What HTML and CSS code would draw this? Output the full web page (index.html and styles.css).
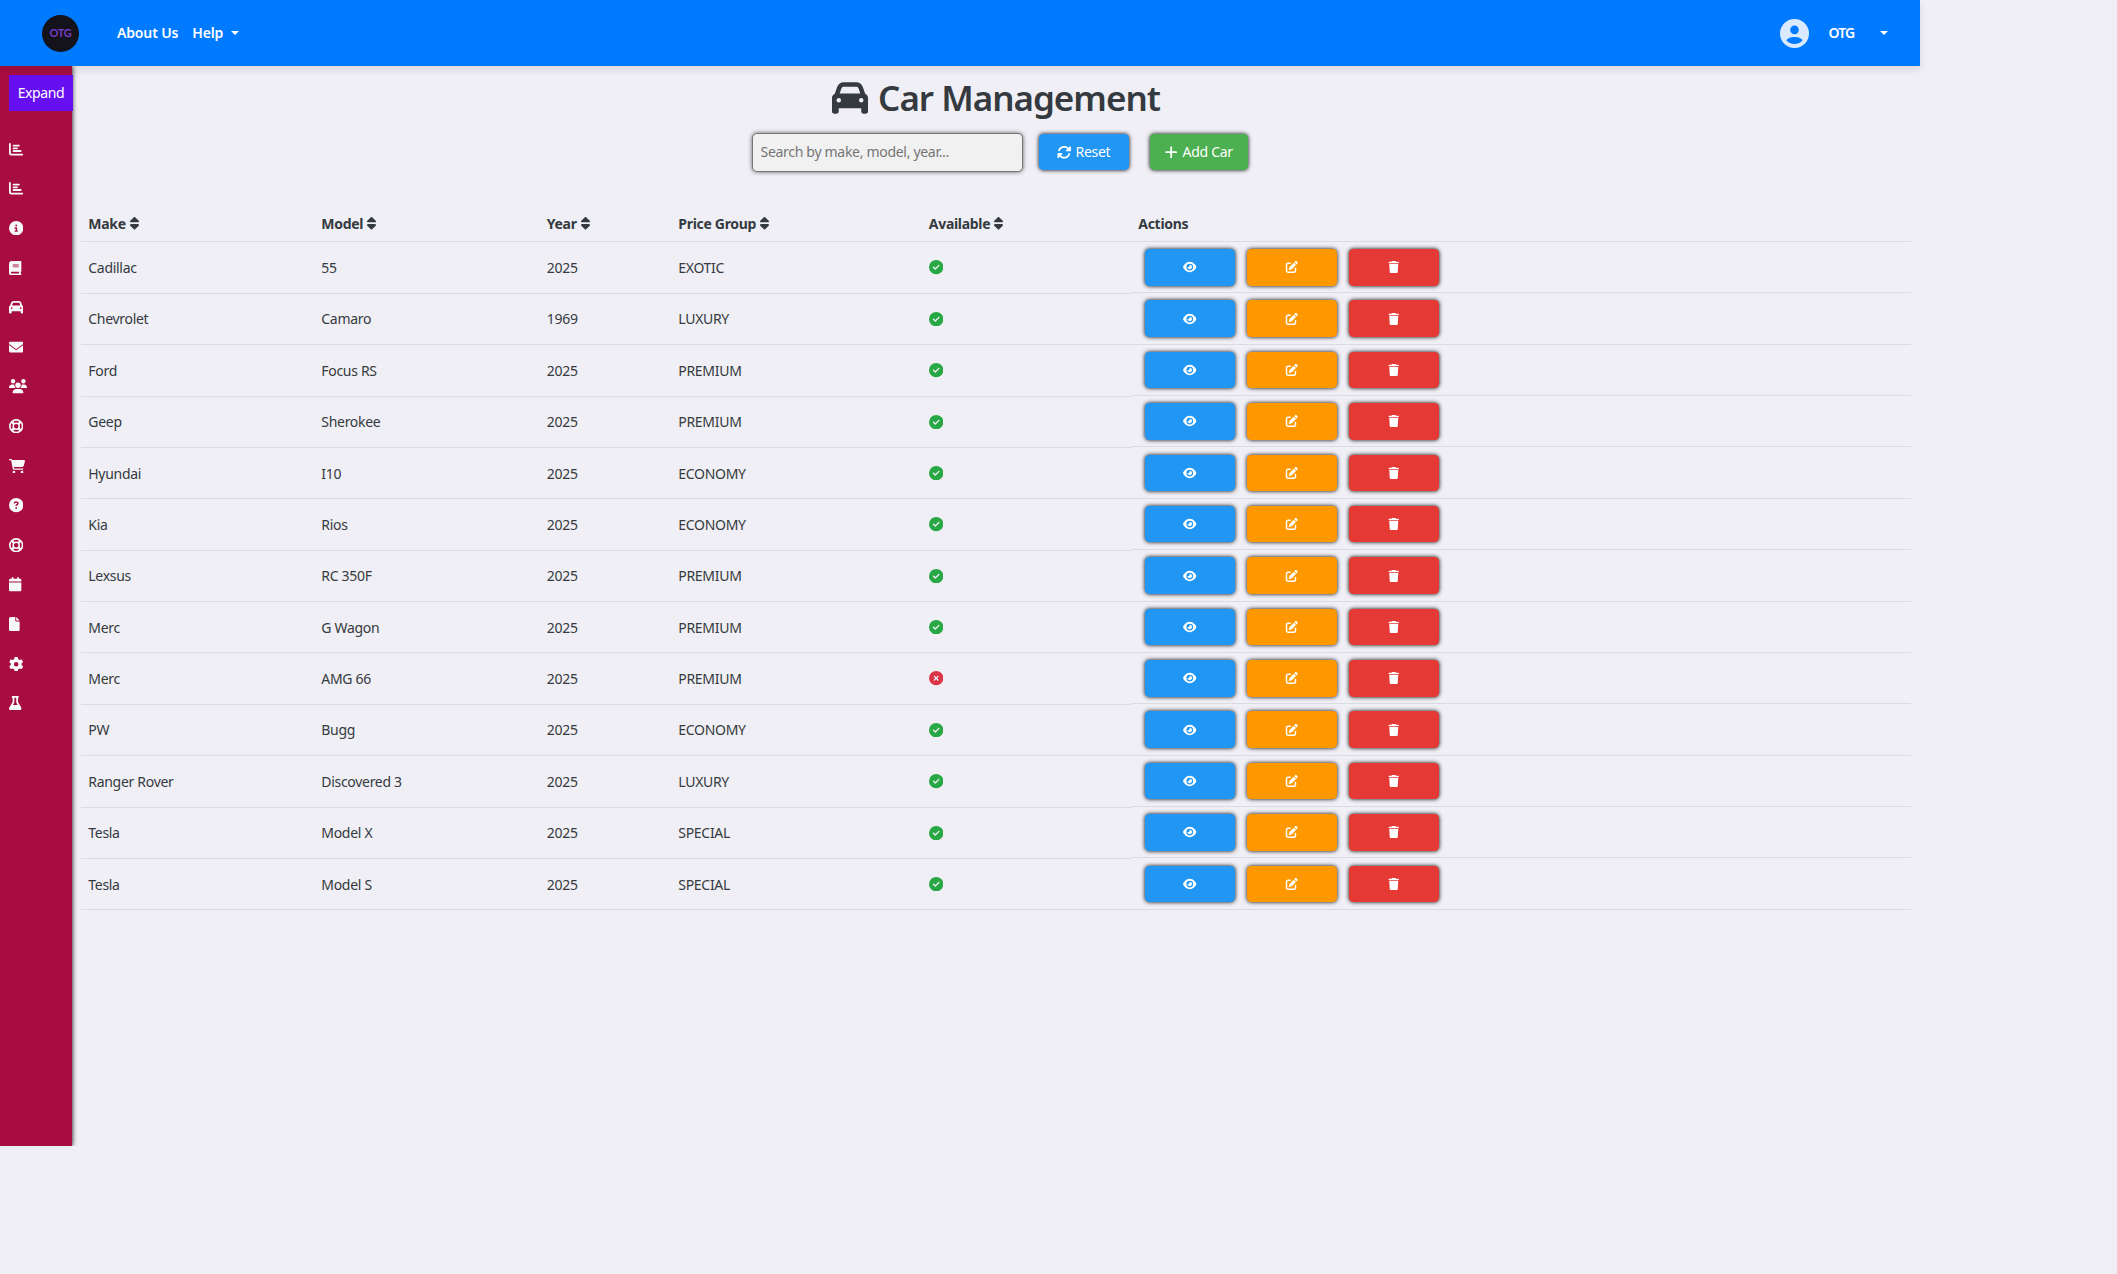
FILE: index.html
```html
<!DOCTYPE html>
<html lang="en">
  <head>
    <meta charset="UTF-8" />
    <meta name="viewport" content="width=device-width, initial-scale=1.0" />
    <title>Car Management</title>
    <link rel="stylesheet" href="styles.css">
  </head>
  <body>
    <svg class="sprite" xmlns="http://www.w3.org/2000/svg">
      <symbol id="chart" viewBox="0 0 512 512"><path d="M32 32c17.700 0 32 14.300 32 32V400c0 8.800 7.200 16 16 16H480c17.700 0 32 14.300 32 32s-14.300 32-32 32H80c-44.200 0-80-35.800-80-80V64C0 46.300 14.300 32 32 32zm96 96c0-17.700 14.300-32 32-32l192 0c17.700 0 32 14.300 32 32s-14.300 32-32 32l-192 0c-17.700 0-32-14.300-32-32zm32 64H288c17.700 0 32 14.300 32 32s-14.300 32-32 32H160c-17.700 0-32-14.300-32-32s14.300-32 32-32zm0 96H416c17.700 0 32 14.300 32 32s-14.300 32-32 32H160c-17.700 0-32-14.300-32-32s14.300-32 32-32z"/></symbol>
      <symbol id="info" viewBox="0 0 512 512"><path d="M256 512A256 256 0 1 0 256 0a256 256 0 1 0 0 512zM216 336h24V272H216c-13.300 0-24-10.700-24-24s10.700-24 24-24h48c13.300 0 24 10.700 24 24v88h8c13.300 0 24 10.700 24 24s-10.700 24-24 24H216c-13.300 0-24-10.700-24-24s10.700-24 24-24zm40-208a32 32 0 1 1 0 64 32 32 0 1 1 0-64z"/></symbol>
      <symbol id="book" viewBox="0 0 448 512"><path d="M96 0C43 0 0 43 0 96V416c0 53 43 96 96 96H384h32c17.700 0 32-14.300 32-32s-14.300-32-32-32V384c17.700 0 32-14.300 32-32V32c0-17.700-14.300-32-32-32H384 96zm0 384H352v64H96c-17.700 0-32-14.300-32-32s14.300-32 32-32zm32-240c0-8.800 7.200-16 16-16H336c8.800 0 16 7.200 16 16s-7.200 16-16 16H144c-8.800 0-16-7.200-16-16zm16 48H336c8.800 0 16 7.200 16 16s-7.200 16-16 16H144c-8.800 0-16-7.200-16-16s7.200-16 16-16z"/></symbol>
      <symbol id="car" viewBox="0 0 512 512"><path d="M135.200 117.400L109.100 192H402.900l-26.100-74.600C372.300 104.600 360.200 96 346.600 96H165.400c-13.600 0-25.700 8.600-30.200 21.400zM39.600 196.800L74.800 96.300C88.300 57.800 124.600 32 165.400 32H346.600c40.800 0 77.100 25.800 90.600 64.300l35.200 100.500c23.200 9.600 39.600 32.500 39.600 59.200V400v48c0 17.700-14.300 32-32 32H448c-17.700 0-32-14.300-32-32V400H96v48c0 17.700-14.300 32-32 32H32c-17.700 0-32-14.300-32-32V400 256c0-26.700 16.400-49.600 39.600-59.200zM128 288a32 32 0 1 0 -64 0 32 32 0 1 0 64 0zm288 32a32 32 0 1 0 0-64 32 32 0 1 0 0 64z"/></symbol>
      <symbol id="mail" viewBox="0 0 512 512"><path d="M48 64C21.500 64 0 85.500 0 112c0 15.100 7.100 29.300 19.200 38.400L236.800 313.600c11.400 8.500 27 8.500 38.400 0L492.800 150.400c12.100-9.100 19.200-23.300 19.200-38.400c0-26.500-21.500-48-48-48H48zM0 176V384c0 35.300 28.700 64 64 64H448c35.300 0 64-28.700 64-64V176L294.400 339.200c-22.800 17.100-54 17.100-76.800 0L0 176z"/></symbol>
      <symbol id="users" viewBox="0 0 640 512"><path d="M144 0a80 80 0 1 1 0 160A80 80 0 1 1 144 0zM512 0a80 80 0 1 1 0 160A80 80 0 1 1 512 0zM0 298.700C0 239.800 47.800 192 106.700 192h42.700c15.900 0 31 3.500 44.600 9.700c-1.300 7.200-1.900 14.700-1.900 22.300c0 38.200 16.800 72.500 43.300 96H21.300C9.600 320 0 310.400 0 298.700zM405.300 320h-.7c26.600-23.500 43.300-57.800 43.300-96c0-7.600-.7-15-1.900-22.300c13.600-6.300 28.700-9.700 44.600-9.700h42.700C592.200 192 640 239.800 640 298.700c0 11.800-9.600 21.300-21.300 21.300H405.300zM224 224a96 96 0 1 1 192 0 96 96 0 1 1 -192 0zM128 485.300C128 411.700 187.700 352 261.300 352H378.700C452.300 352 512 411.700 512 485.300c0 14.700-11.900 26.700-26.700 26.700H154.700c-14.700 0-26.700-11.900-26.700-26.700z"/></symbol>
      <symbol id="ring" viewBox="0 0 512 512"><g fill="none" stroke="currentColor"><circle cx="256" cy="256" r="226" stroke-width="58"/><circle cx="256" cy="256" r="108" stroke-width="54"/><path stroke-width="84" d="M96 96l90 90M416 96l-90 90M96 416l90-90M416 416l-90-90"/></g></symbol>
      <symbol id="cart" viewBox="0 0 576 512"><path d="M0 24C0 10.700 10.700 0 24 0H69.500c22 0 41.500 12.800 50.600 32h411c26.300 0 45.500 25 38.600 50.400l-41 152.300c-8.500 31.400-37 53.300-69.500 53.300H170.700l5.400 28.500c2.200 11.300 12.100 19.500 23.600 19.500H488c13.300 0 24 10.700 24 24s-10.700 24-24 24H199.700c-34.600 0-64.300-24.600-70.700-58.500L77.400 54.500c-.7-3.800-4-6.500-7.900-6.500H24C10.700 48 0 37.300 0 24zM128 464a48 48 0 1 1 96 0 48 48 0 1 1 -96 0zm336-48a48 48 0 1 1 0 96 48 48 0 1 1 0-96z"/></symbol>
      <symbol id="question" viewBox="0 0 512 512"><path d="M256 512A256 256 0 1 0 256 0a256 256 0 1 0 0 512zM169.800 165.300c7.900-22.300 29.100-37.300 52.800-37.300h58.300c34.900 0 63.100 28.300 63.100 63.100c0 22.600-12.100 43.500-31.700 54.800L280 264.400c-.2 13-10.900 23.600-24 23.600c-13.300 0-24-10.700-24-24V250.500c0-8.600 4.600-16.500 12.100-20.800l44.300-25.400c4.700-2.700 7.600-7.700 7.600-13.100c0-8.400-6.800-15.100-15.100-15.100H222.600c-3.400 0-6.400 2.100-7.500 5.300l-.4 1.200c-4.400 12.500-18.200 19-30.600 14.600s-19-18.200-14.600-30.600l.3-1.300zM224 352a32 32 0 1 1 64 0 32 32 0 1 1 -64 0z"/></symbol>
      <symbol id="calendar" viewBox="0 0 448 512"><path d="M96 32V64H48C21.500 64 0 85.500 0 112v48H448V112c0-26.500-21.500-48-48-48H352V32c0-17.700-14.300-32-32-32s-32 14.300-32 32V64H160V32c0-17.700-14.300-32-32-32S96 14.300 96 32zM448 192H0V464c0 26.500 21.500 48 48 48H400c26.500 0 48-21.500 48-48V192z"/></symbol>
      <symbol id="file" viewBox="0 0 384 512"><path d="M0 64C0 28.700 28.700 0 64 0H224V128c0 17.700 14.300 32 32 32H384V448c0 35.300-28.700 64-64 64H64c-35.300 0-64-28.700-64-64V64zm384 64H256V0L384 128z"/></symbol>
      <symbol id="gear" viewBox="0 0 512 512"><path d="M495.900 166.600c3.200 8.700 .5 18.400-6.400 24.600l-43.300 39.400c1.100 8.300 1.700 16.800 1.700 25.400s-.6 17.100-1.700 25.400l43.300 39.400c6.900 6.200 9.600 15.900 6.400 24.600c-4.400 11.900-9.700 23.300-15.800 34.300l-4.700 8.100c-6.600 11-14 21.400-22.100 31.200c-5.900 7.200-15.700 9.600-24.500 6.800l-55.700-17.700c-13.400 10.300-28.200 18.900-44 25.400l-12.500 57.100c-2 9.100-9 16.300-18.200 17.800c-13.800 2.300-28 3.500-42.500 3.500s-28.700-1.200-42.500-3.500c-9.200-1.500-16.200-8.700-18.200-17.800l-12.500-57.100c-15.800-6.500-30.600-15.100-44-25.400L83.100 425.900c-8.800 2.800-18.600 .3-24.500-6.800c-8.100-9.800-15.500-20.200-22.100-31.200l-4.700-8.100c-6.100-11-11.400-22.400-15.800-34.300c-3.200-8.700-.5-18.400 6.400-24.600l43.300-39.400C64.600 273.100 64 264.600 64 256s.6-17.100 1.700-25.400L22.400 191.200c-6.900-6.200-9.600-15.900-6.400-24.600c4.400-11.900 9.700-23.300 15.800-34.300l4.700-8.100c6.600-11 14-21.400 22.100-31.200c5.900-7.200 15.700-9.600 24.500-6.800l55.700 17.700c13.400-10.300 28.200-18.900 44-25.400l12.500-57.100c2-9.100 9-16.300 18.200-17.800C227.300 1.200 241.500 0 256 0s28.700 1.200 42.500 3.500c9.200 1.500 16.200 8.700 18.200 17.800l12.500 57.100c15.800 6.500 30.600 15.100 44 25.400l55.700-17.700c8.800-2.800 18.600-.3 24.500 6.800c8.100 9.800 15.500 20.200 22.100 31.200l4.700 8.100c6.100 11 11.400 22.400 15.800 34.300zM256 336a80 80 0 1 0 0-160 80 80 0 1 0 0 160z"/></symbol>
      <symbol id="flask" viewBox="0 0 448 512"><path d="M288 0H160 128C110.300 0 96 14.300 96 32s14.300 32 32 32V196.800c0 11.800-3.300 23.500-9.500 33.500L10.300 406.200C3.600 417.200 0 429.700 0 442.600C0 480.900 31.100 512 69.400 512H378.600c38.300 0 69.400-31.100 69.400-69.400c0-12.800-3.600-25.400-10.300-36.400L329.500 230.400c-6.200-10.100-9.500-21.700-9.500-33.500V64c17.700 0 32-14.300 32-32s-14.300-32-32-32H288zM192 196.800V64h64V196.800c0 23.700 6.600 46.900 19 67.100L309.500 320h-171L173 263.900c12.400-20.200 19-43.400 19-67.100z"/></symbol>
      <symbol id="refresh" viewBox="0 0 512 512"><path d="M105.100 202.600c7.700-21.800 20.200-42.300 37.800-59.800c62.500-62.500 163.800-62.500 226.300 0L386.300 160H352c-17.700 0-32 14.300-32 32s14.300 32 32 32H463.500c0 0 0 0 0 0h.4c17.700 0 32-14.300 32-32V80c0-17.700-14.300-32-32-32s-32 14.300-32 32v35.200L414.400 97.600c-87.500-87.500-229.300-87.500-316.800 0C73.200 122 55.600 150.700 44.800 181.400c-5.900 16.700 2.900 34.900 19.500 40.800s34.900-2.900 40.800-19.500zM39 289.300c-5 1.500-9.800 4.200-13.700 8.200c-4 4-6.700 8.800-8.100 14c-.3 1.200-.6 2.500-.8 3.800c-.3 1.700-.4 3.400-.4 5.100V432c0 17.700 14.300 32 32 32s32-14.300 32-32V396.900l17.600 17.500c87.500 87.400 229.300 87.400 316.700 0c24.400-24.400 42.100-53.100 52.900-83.700c5.900-16.700-2.900-34.900-19.500-40.800s-34.900 2.900-40.800 19.500c-7.700 21.800-20.200 42.300-37.800 59.800c-62.500 62.500-163.800 62.500-226.300 0l-.1-.1L125.600 352H160c17.700 0 32-14.300 32-32s-14.300-32-32-32H48.400c-1.600 0-3.200 .1-4.800 .3s-3.100 .5-4.600 1z"/></symbol>
      <symbol id="plus" viewBox="0 0 448 512"><path d="M256 80c0-17.700-14.300-32-32-32s-32 14.300-32 32V224H48c-17.700 0-32 14.300-32 32s14.300 32 32 32H192V432c0 17.700 14.300 32 32 32s32-14.300 32-32V288H400c17.700 0 32-14.300 32-32s-14.300-32-32-32H256V80z"/></symbol>
      <symbol id="sort" viewBox="0 0 320 512"><path d="M137.400 41.400c12.500-12.500 32.800-12.500 45.300 0l128 128c9.200 9.200 11.900 22.900 6.900 34.900s-16.600 19.800-29.600 19.800H32c-12.900 0-24.600-7.800-29.600-19.800s-2.200-25.700 6.900-34.900l128-128zm0 429.300l-128-128c-9.200-9.200-11.900-22.900-6.900-34.900s16.600-19.800 29.600-19.800H288c12.900 0 24.600 7.800 29.600 19.800s2.200 25.700-6.900 34.900l-128 128c-12.500 12.500-32.800 12.500-45.300 0z"/></symbol>
      <symbol id="check" viewBox="0 0 512 512"><path d="M256 512A256 256 0 1 0 256 0a256 256 0 1 0 0 512zM369 209L241 337c-9.400 9.400-24.600 9.400-33.900 0l-64-64c-9.400-9.400-9.400-24.600 0-33.900s24.600-9.400 33.900 0l47 47L335 175c9.400-9.400 24.600-9.400 33.900 0s9.400 24.600 0 33.900z"/></symbol>
      <symbol id="cross" viewBox="0 0 512 512"><path d="M256 512A256 256 0 1 0 256 0a256 256 0 1 0 0 512zM175 175c9.400-9.400 24.600-9.400 33.900 0l47 47 47-47c9.400-9.400 24.600-9.400 33.900 0s9.400 24.600 0 33.900l-47 47 47 47c9.400 9.400 9.400 24.600 0 33.900s-24.600 9.400-33.900 0l-47-47-47 47c-9.400 9.400-24.600 9.400-33.900 0s-9.400-24.600 0-33.900l47-47-47-47c-9.400-9.400-9.400-24.600 0-33.900z"/></symbol>
      <symbol id="eye" viewBox="0 0 576 512"><path d="M288 32c-80.800 0-145.500 36.800-192.600 80.600C48.600 156 17.300 208 2.500 243.700c-3.300 7.900-3.300 16.700 0 24.600C17.300 304 48.600 356 95.400 399.400C142.500 443.200 207.200 480 288 480s145.500-36.800 192.600-80.600c46.800-43.500 78.100-95.400 93-131.100c3.300-7.900 3.300-16.700 0-24.600c-14.900-35.700-46.200-87.700-93-131.100C433.500 68.800 368.800 32 288 32zM144 256a144 144 0 1 1 288 0 144 144 0 1 1 -288 0zm144-64c0 35.300-28.700 64-64 64c-7.100 0-13.900-1.200-20.300-3.300c-5.500-1.800-11.900 1.600-11.700 7.400c.3 6.900 1.300 13.800 3.200 20.700c13.700 51.200 66.400 81.600 117.600 67.900s81.600-66.400 67.900-117.600c-11.100-41.500-47.800-69.400-88.600-71.100c-5.800-.2-9.200 6.100-7.400 11.700c2.100 6.400 3.300 13.200 3.300 20.300z"/></symbol>
      <symbol id="edit" viewBox="0 0 512 512"><path d="M471.600 21.700c-21.900-21.900-57.300-21.900-79.200 0L362.300 51.700l97.900 97.900 30.100-30.100c21.900-21.900 21.900-57.300 0-79.200L471.600 21.700zm-299.200 220c-6.100 6.100-10.800 13.600-13.500 21.900l-29.600 88.800c-2.900 8.600-.6 18.100 5.800 24.600s15.900 8.700 24.600 5.800l88.800-29.600c8.200-2.700 15.700-7.400 21.900-13.500L437.700 172.300 339.700 74.300 172.400 241.700zM96 64C43 64 0 107 0 160V416c0 53 43 96 96 96H352c53 0 96-43 96-96V320c0-17.700-14.300-32-32-32s-32 14.300-32 32v96c0 17.700-14.300 32-32 32H96c-17.700 0-32-14.300-32-32V160c0-17.700 14.300-32 32-32h96c17.700 0 32-14.300 32-32s-14.300-32-32-32H96z"/></symbol>
      <symbol id="trash" viewBox="0 0 448 512"><path d="M135.200 17.700L128 32H32C14.300 32 0 46.300 0 64S14.300 96 32 96H416c17.700 0 32-14.300 32-32s-14.300-32-32-32H320l-7.200-14.300C307.400 6.800 296.300 0 284.200 0H163.800c-12.100 0-23.200 6.800-28.600 17.700zM416 128H32L53.200 467c1.600 25.300 22.600 45 47.900 45H346.900c25.300 0 46.300-19.700 47.900-45L416 128z"/></symbol>
      <symbol id="account" viewBox="0 0 29 29"><path fill-rule="evenodd" d="M14.500 0a14.500 14.500 0 1 0 0 29a14.500 14.500 0 1 0 0-29zM14.500 6.600a4.300 4.300 0 1 1 0 8.600a4.300 4.300 0 1 1 0-8.600zM6.500 21.600C7.500 16.800 21.500 16.800 22.500 21.600C19 26.200 10 26.200 6.500 21.600z"/></symbol>
    </svg>

    <header class="navbar">
      <div class="logo"><span>OTG</span></div>
      <nav class="links">
        <a href="#">About Us</a>
        <a href="#" class="dropdown">Help</a>
      </nav>
      <div class="account">
        <svg class="avatar"><use href="#account"/></svg>
        <a href="#" class="user dropdown">OTG</a>
      </div>
    </header>

    <div class="layout">
      <aside class="sidebar">
        <button class="expand">Expand</button>
        <ul class="menu">
          <li><svg><use href="#chart"/></svg></li>
          <li><svg><use href="#chart"/></svg></li>
          <li><svg><use href="#info"/></svg></li>
          <li><svg class="w-book"><use href="#book"/></svg></li>
          <li><svg><use href="#car"/></svg></li>
          <li><svg><use href="#mail"/></svg></li>
          <li><svg class="w-users"><use href="#users"/></svg></li>
          <li><svg><use href="#ring"/></svg></li>
          <li><svg class="w-cart"><use href="#cart"/></svg></li>
          <li><svg><use href="#question"/></svg></li>
          <li><svg><use href="#ring"/></svg></li>
          <li><svg class="w-book"><use href="#calendar"/></svg></li>
          <li><svg class="w-file"><use href="#file"/></svg></li>
          <li><svg><use href="#gear"/></svg></li>
          <li><svg class="w-book"><use href="#flask"/></svg></li>
        </ul>
      </aside>

      <main class="content">
        <h1><svg><use href="#car"/></svg><span>Car Management</span></h1>
        <div class="controls">
          <input class="search" type="text" placeholder="Search by make, model, year..." />
          <button class="btn reset"><svg><use href="#refresh"/></svg><span>Reset</span></button>
          <button class="btn add"><svg><use href="#plus"/></svg><span>Add Car</span></button>
        </div>
        <table class="cars">
          <thead>
            <tr>
              <th>Make <svg><use href="#sort"/></svg></th>
              <th>Model <svg><use href="#sort"/></svg></th>
              <th>Year <svg><use href="#sort"/></svg></th>
              <th>Price Group <svg><use href="#sort"/></svg></th>
              <th>Available <svg><use href="#sort"/></svg></th>
              <th>Actions</th>
            </tr>
          </thead>
          <tbody></tbody>
        </table>
      </main>
    </div>

    <script>
      const cars = [
        ["Cadillac", "55", 2025, "EXOTIC", true],
        ["Chevrolet", "Camaro", 1969, "LUXURY", true],
        ["Ford", "Focus RS", 2025, "PREMIUM", true],
        ["Geep", "Sherokee", 2025, "PREMIUM", true],
        ["Hyundai", "I10", 2025, "ECONOMY", true],
        ["Kia", "Rios", 2025, "ECONOMY", true],
        ["Lexsus", "RC 350F", 2025, "PREMIUM", true],
        ["Merc", "G Wagon", 2025, "PREMIUM", true],
        ["Merc", "AMG 66", 2025, "PREMIUM", false],
        ["PW", "Bugg", 2025, "ECONOMY", true],
        ["Ranger Rover", "Discovered 3", 2025, "LUXURY", true],
        ["Tesla", "Model X", 2025, "SPECIAL", true],
        ["Tesla", "Model S", 2025, "SPECIAL", true],
      ];

      const icon = (name) => `<svg><use href="#${name}"/></svg>`;

      document.querySelector(".cars tbody").innerHTML = cars
        .map(
          ([make, model, year, group, available]) => `
          <tr>
            <td>${make}</td>
            <td>${model}</td>
            <td>${year}</td>
            <td>${group}</td>
            <td class="${available ? "yes" : "no"}">${icon(available ? "check" : "cross")}</td>
            <td class="actions">
              <button class="btn view">${icon("eye")}</button>
              <button class="btn edit">${icon("edit")}</button>
              <button class="btn delete">${icon("trash")}</button>
            </td>
          </tr>`
        )
        .join("");
    </script>
  </body>
</html>
```
FILE: styles.css
```css
* {
  margin: 0;
  padding: 0;
  box-sizing: border-box;
}
body {
  background-color: #f0eff5;
  color: #343a40;
  font-family: "Noto Sans", "Open Sans", sans-serif;
  font-size: 14px;
  line-height: 21.6px;
  letter-spacing: -0.3px;
}
ul {
  list-style: none;
}
a {
  text-decoration: none;
  color: #fff;
}
svg {
  fill: currentColor;
}
button,
input {
  font: inherit;
  letter-spacing: inherit;
}
.sprite {
  display: none;
}

.navbar {
  position: relative;
  z-index: 2;
  display: flex;
  align-items: center;
  width: 1920px;
  height: 66px;
  padding: 0 32px 0 42px;
  background-color: #007bff;
  box-shadow: 0 4px 8px rgba(0, 0, 0, 0.1);
  font-weight: 600;
  letter-spacing: -0.15px;
}
.logo {
  display: flex;
  justify-content: center;
  align-items: center;
  width: 37px;
  height: 37px;
  border-radius: 50%;
  background-color: #14131c;
  color: #7a3cc8;
  font-family: Lato, sans-serif;
  font-size: 11px;
  font-weight: 700;
  letter-spacing: -0.3px;
}
.links {
  display: flex;
  gap: 14px;
  margin-left: 38px;
}
.dropdown::after {
  content: "";
  display: inline-block;
  margin-left: 8px;
  vertical-align: 3px;
  border-top: 4px solid;
  border-left: 4px solid transparent;
  border-right: 4px solid transparent;
}
.account {
  display: flex;
  align-items: center;
  margin-left: auto;
}
.avatar {
  width: 29px;
  height: 29px;
  margin-right: 19px;
  color: #d9eaff;
}
.user {
  letter-spacing: -0.8px;
}
.user.dropdown::after {
  margin-left: 25.5px;
}

.layout {
  display: flex;
  width: 1920px;
  height: 1080px;
}
.sidebar {
  width: 72px;
  padding-top: 9px;
  background-color: #a80d41;
  box-shadow: 0 0 5px #000;
  clip-path: inset(0 -6px 0 0);
  color: #f8f9fa;
}
.expand {
  display: block;
  width: 64px;
  height: 36px;
  margin-left: 9px;
  border: none;
  background-color: #6610f2;
  color: #fff;
  letter-spacing: -0.4px;
}
.menu {
  margin-top: 18.2px;
}
.menu li {
  display: flex;
  align-items: center;
  height: 39.6px;
  padding-left: 9px;
}
.menu svg {
  width: 14.4px;
  height: 14.4px;
}
.menu .w-book {
  width: 12.6px;
}
.menu .w-users {
  width: 18px;
}
.menu .w-cart {
  width: 16.2px;
}
.menu .w-file {
  width: 10.8px;
}

.content {
  flex: 1;
  padding: 10.5px 9px 0;
}
h1 {
  display: flex;
  justify-content: center;
  align-items: center;
  gap: 10px;
  height: 43px;
  font-size: 35px;
  font-weight: 600;
  letter-spacing: -1px;
}
h1 svg {
  width: 36px;
  height: 36px;
}
.controls {
  display: flex;
  justify-content: center;
  align-items: center;
  margin-top: 13px;
  padding-left: 7px;
}
.search {
  width: 271px;
  height: 39px;
  padding: 0 8px 1px;
  border: 1px solid #777;
  border-radius: 5px;
  background-color: #f1f1f1;
  box-shadow: 0 0 4px rgba(0, 0, 0, 0.6);
}
.search::placeholder {
  color: #757575;
}
.btn {
  display: flex;
  justify-content: center;
  align-items: center;
  gap: 4px;
  width: 90.5px;
  height: 36.5px;
  border: none;
  border-radius: 4.5px;
  box-shadow: 0 0 4.5px #000;
  color: #fff;
}
.btn svg {
  width: 14.4px;
  height: 14.4px;
}
.reset {
  margin: 0 20.5px 0 16px;
}
.add {
  width: 98px;
  background-color: #4caf50;
}
.reset,
.view {
  background-color: #2196f3;
}
.edit {
  background-color: #ff9800;
}
.delete {
  background-color: #e53935;
}

.cars {
  display: block;
  margin-top: 32.4px;
}
.cars thead,
.cars tbody {
  display: block;
}
.cars tr {
  display: grid;
  grid-template-columns: 233px 225.5px 131.5px 250.5px 209.5px 1fr;
  height: 51.38px;
}
.cars thead tr {
  height: 38.5px;
}
.cars th,
.cars td {
  display: flex;
  align-items: center;
  padding: 0.6px 7.3px 0;
  border-bottom: 1px solid #dadbe0;
}
.cars th {
  gap: 4px;
  padding-top: 1.4px;
  font-weight: 700;
}
.cars th svg {
  width: 9px;
  height: 14.4px;
}
.cars td svg {
  width: 14.4px;
  height: 14.4px;
}
.cars .yes,
.cars .no {
  padding-top: 0;
}
.cars .yes {
  color: #28a745;
}
.cars .no {
  color: #dc3545;
}
.cars .actions {
  gap: 11.5px;
  height: 50.88px;
  padding-top: 0;
  padding-left: 13.5px;
}
.cars .actions svg {
  width: 13.5px;
  height: 12px;
}
```
